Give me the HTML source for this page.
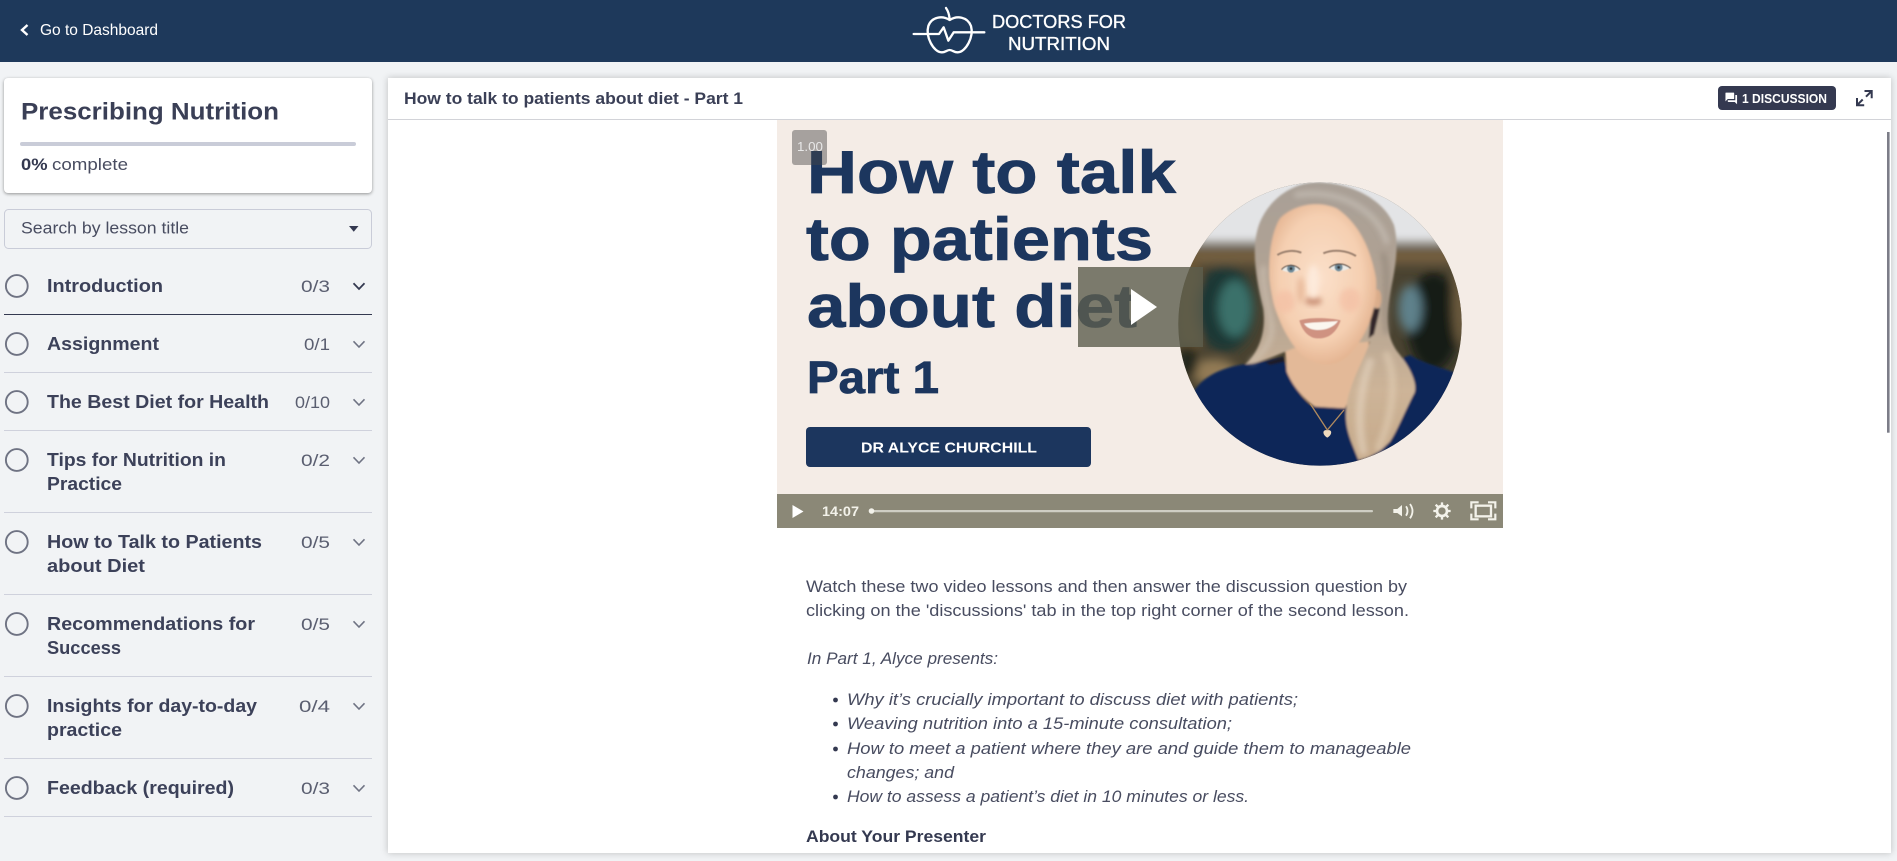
<!DOCTYPE html>
<html lang="en">
<head>
<meta charset="utf-8">
<title>How to talk to patients about diet - Part 1</title>
<style>
html,body{margin:0;padding:0;width:1897px;height:861px;overflow:hidden;background:#f1f3f5}
body{position:relative;font-family:"Liberation Sans",sans-serif}
.hd{position:absolute;left:0;top:0;width:1897px;height:62px;background:#1e395b}
.card{position:absolute;left:4px;top:78px;width:368px;height:115px;background:#fff;border-radius:4px;box-shadow:0 1px 3px rgba(0,0,0,.4)}
.panel{position:absolute;left:388px;top:78px;width:1503px;height:775px;background:#fff;box-shadow:0 0 7px rgba(0,0,0,.22)}
svg.main{position:absolute;left:0;top:0}
text{font-family:"Liberation Sans",sans-serif;white-space:pre}
.b{font-weight:700}
.it{font-size:18.1px;font-weight:700;fill:#3c4159}
.ct{font-size:17px;fill:#5a5e70}
.p{font-size:16.9px;fill:#484c60}
.i{font-size:16.9px;font-style:italic;fill:#484c60}
.nv{font-weight:700;fill:#1c365e;stroke:#1c365e;stroke-width:.8px}
</style>
</head>
<body>
<div class="hd"></div>
<div class="card"></div>
<div class="panel"></div>
<svg class="main" width="1897" height="861" viewBox="0 0 1897 861" xmlns="http://www.w3.org/2000/svg">
<defs>
<clipPath id="pc"><circle cx="450" cy="447" r="425"/></clipPath>
<clipPath id="panelclip"><rect x="388" y="78" width="1503" height="775"/></clipPath>
<filter id="b12" x="-30%" y="-30%" width="160%" height="160%"><feGaussianBlur stdDeviation="14"/></filter>
<filter id="b5" x="-50%" y="-50%" width="200%" height="200%"><feGaussianBlur stdDeviation="9"/></filter>
<filter id="b3" x="-20%" y="-20%" width="140%" height="140%"><feGaussianBlur stdDeviation="3"/></filter>
<filter id="b1" x="-20%" y="-20%" width="140%" height="140%"><feGaussianBlur stdDeviation="1.6"/></filter>
<radialGradient id="fg" cx="48%" cy="46%" r="60%"><stop offset="0" stop-color="#fbe0ca"/><stop offset=".65" stop-color="#f5cfb1"/><stop offset="1" stop-color="#dfac88"/></radialGradient>
<linearGradient id="hg" x1="0" y1="0" x2="0" y2="1"><stop offset="0" stop-color="#a9a097"/><stop offset=".45" stop-color="#b3a392"/><stop offset=".75" stop-color="#cdb498"/><stop offset="1" stop-color="#c6aa8b"/></linearGradient>
</defs>

<!-- header -->
<path d="M27.5 25 L22 30 L27.5 35" fill="none" stroke="#fff" stroke-width="2.4"/>
<text x="40" y="35" font-size="15.7" fill="#fff" textLength="118" lengthAdjust="spacingAndGlyphs">Go to Dashboard</text>
<g transform="translate(905,0) scale(.3333)" fill="none" stroke="#fff" stroke-width="7" stroke-linejoin="round" stroke-linecap="round">
<path d="M134 60 C112 46 80 50 70 78 C61 110 85 156 110 157 C120 158 125 150 134 150 C143 150 148 158 158 157 C183 156 207 110 198 78 C187 50 156 46 134 60 Z"/>
<path d="M123 24 C130 34 133 46 134 58"/>
<path d="M26 102 H102 L116 82 L130 122 L146 97 H238"/>
</g>
<g style="stroke:#fff;stroke-width:.35px">
<text x="992" y="28" font-size="18.8" fill="#fff" textLength="134" lengthAdjust="spacingAndGlyphs">DOCTORS FOR</text>
<text x="1008" y="50" font-size="18.8" fill="#fff" textLength="102" lengthAdjust="spacingAndGlyphs">NUTRITION</text>
</g>

<!-- left card -->
<text x="21" y="119.5" font-size="24.4" class="b" fill="#3a3f56" textLength="258" lengthAdjust="spacingAndGlyphs">Prescribing Nutrition</text>
<rect x="20" y="142" width="336" height="4" rx="2" fill="#c9ccd8"/>
<text x="21" y="170" font-size="17" class="b" fill="#343950" textLength="26.5" lengthAdjust="spacingAndGlyphs">0%</text>
<text x="52" y="170" font-size="17" fill="#484c60" textLength="76" lengthAdjust="spacingAndGlyphs">complete</text>

<!-- search -->
<rect x="4.5" y="209.5" width="367" height="39" rx="4" fill="#f1f3f5" stroke="#c9ccd8"/>
<text x="21" y="233.5" font-size="16.9" fill="#484c60" textLength="168" lengthAdjust="spacingAndGlyphs">Search by lesson title</text>
<path d="M349 226 H358.5 L353.75 231.7 Z" fill="#343950"/>

<!-- list -->
<g fill="none" stroke="#6f7383" stroke-width="1.9">
<circle cx="16.8" cy="286" r="10.9"/><circle cx="16.8" cy="344" r="10.9"/><circle cx="16.8" cy="402" r="10.9"/><circle cx="16.8" cy="460" r="10.9"/><circle cx="16.8" cy="542" r="10.9"/><circle cx="16.8" cy="624" r="10.9"/><circle cx="16.8" cy="706" r="10.9"/><circle cx="16.8" cy="788" r="10.9"/>
</g>
<g class="t">
<text class="it" x="47" y="292" textLength="116" lengthAdjust="spacingAndGlyphs">Introduction</text>
<text class="it" x="47" y="350" textLength="112" lengthAdjust="spacingAndGlyphs">Assignment</text>
<text class="it" x="47" y="408" textLength="222" lengthAdjust="spacingAndGlyphs">The Best Diet for Health</text>
<text class="it" x="47" y="466" textLength="179" lengthAdjust="spacingAndGlyphs">Tips for Nutrition in</text>
<text class="it" x="47" y="490" textLength="75" lengthAdjust="spacingAndGlyphs">Practice</text>
<text class="it" x="47" y="548" textLength="215" lengthAdjust="spacingAndGlyphs">How to Talk to Patients</text>
<text class="it" x="47" y="572" textLength="98" lengthAdjust="spacingAndGlyphs">about Diet</text>
<text class="it" x="47" y="630" textLength="208" lengthAdjust="spacingAndGlyphs">Recommendations for</text>
<text class="it" x="47" y="654" textLength="74" lengthAdjust="spacingAndGlyphs">Success</text>
<text class="it" x="47" y="712" textLength="210" lengthAdjust="spacingAndGlyphs">Insights for day-to-day</text>
<text class="it" x="47" y="736" textLength="75" lengthAdjust="spacingAndGlyphs">practice</text>
<text class="it" x="47" y="794" textLength="187" lengthAdjust="spacingAndGlyphs">Feedback (required)</text>
<text class="ct" x="301" y="292" textLength="29" lengthAdjust="spacingAndGlyphs">0/3</text>
<text class="ct" x="304" y="350" textLength="26" lengthAdjust="spacingAndGlyphs">0/1</text>
<text class="ct" x="295" y="408" textLength="35" lengthAdjust="spacingAndGlyphs">0/10</text>
<text class="ct" x="301" y="466" textLength="29" lengthAdjust="spacingAndGlyphs">0/2</text>
<text class="ct" x="301" y="548" textLength="29" lengthAdjust="spacingAndGlyphs">0/5</text>
<text class="ct" x="301" y="630" textLength="29" lengthAdjust="spacingAndGlyphs">0/5</text>
<text class="ct" x="299" y="712" textLength="31" lengthAdjust="spacingAndGlyphs">0/4</text>
<text class="ct" x="301" y="794" textLength="29" lengthAdjust="spacingAndGlyphs">0/3</text>
</g>
<path d="M353.5 283.3 L359 289 L364.5 283.3" fill="none" stroke="#343950" stroke-width="1.8"/>
<g fill="none" stroke="#6f7383" stroke-width="1.6">
<path d="M353.5 341.3 L359 347 L364.5 341.3"/><path d="M353.5 399.3 L359 405 L364.5 399.3"/><path d="M353.5 457.3 L359 463 L364.5 457.3"/><path d="M353.5 539.3 L359 545 L364.5 539.3"/><path d="M353.5 621.3 L359 627 L364.5 621.3"/><path d="M353.5 703.3 L359 709 L364.5 703.3"/><path d="M353.5 785.3 L359 791 L364.5 785.3"/>
</g>
<rect x="4" y="314" width="368" height="1" fill="#343950"/>
<g fill="#cfd1dc">
<rect x="4" y="372" width="368" height="1"/><rect x="4" y="430" width="368" height="1"/><rect x="4" y="512" width="368" height="1"/><rect x="4" y="594" width="368" height="1"/><rect x="4" y="676" width="368" height="1"/><rect x="4" y="758" width="368" height="1"/><rect x="4" y="816" width="368" height="1"/>
</g>

<!-- panel header -->
<text x="404" y="104" font-size="16.9" class="b" fill="#3a3f56" textLength="339" lengthAdjust="spacingAndGlyphs">How to talk to patients about diet - Part 1</text>
<rect x="388" y="119" width="1503" height="1" fill="#d2d3d8"/>
<rect x="1718" y="86" width="118" height="24" rx="4" fill="#343950"/>
<path transform="translate(1724.3,91.5) scale(.58)" fill="#fff" d="M21 6h-2v9H6v2c0 .55.45 1 1 1h11l4 4V7c0-.55-.45-1-1-1zm-4 6V3c0-.55-.45-1-1-1H3c-.55 0-1 .45-1 1v14l4-4h10c.55 0 1-.45 1-1z"/>
<text x="1742" y="103" font-size="13.2" class="b" fill="#fff" textLength="85" lengthAdjust="spacingAndGlyphs">1 DISCUSSION</text>
<g fill="none" stroke="#343950" stroke-width="2">
<path d="M1864.5 91 H1871.7 V98.2 M1871.7 91 L1866 96.7"/>
<path d="M1857 98 V105.2 H1864.2 M1857 105.2 L1862.7 99.5"/>
</g>
<rect x="1887" y="132" width="2.6" height="300.7" fill="#7c7d88"/>

<!-- video -->
<rect x="777" y="120" width="726" height="374" fill="#f4ece6"/>
<text class="nv" x="807" y="193" font-size="60" textLength="369" lengthAdjust="spacingAndGlyphs">How to talk</text>
<text class="nv" x="806" y="260" font-size="60" textLength="347" lengthAdjust="spacingAndGlyphs">to patients</text>
<text class="nv" x="807" y="327" font-size="60" textLength="330" lengthAdjust="spacingAndGlyphs">about diet</text>
<text class="nv" x="807" y="393" font-size="45" textLength="132" lengthAdjust="spacingAndGlyphs">Part 1</text>
<rect x="806" y="427" width="285" height="40" rx="4" fill="#1c365e"/>
<text x="861" y="452.5" font-size="15" class="b" fill="#fff" textLength="176" lengthAdjust="spacingAndGlyphs">DR ALYCE CHURCHILL</text>

<!-- portrait -->
<g transform="translate(1170,175) scale(.33333)">
<g clip-path="url(#pc)">
<rect x="0" y="0" width="900" height="900" fill="#4a4331"/>
<g filter="url(#b12)">
<rect x="-50" y="-50" width="1000" height="255" fill="#e3e4e6"/>
<rect x="-50" y="218" width="1000" height="50" fill="#735f3f"/>
<ellipse cx="60" cy="400" rx="40" ry="160" fill="#6a5636"/>
<ellipse cx="165" cy="400" rx="90" ry="130" fill="#1f3735"/>
<ellipse cx="195" cy="400" rx="50" ry="85" fill="#3a716a"/>
<ellipse cx="130" cy="590" rx="70" ry="38" fill="#927a55"/>
<ellipse cx="55" cy="560" rx="30" ry="50" fill="#22261c"/>
<ellipse cx="790" cy="440" rx="80" ry="150" fill="#191d16"/>
<ellipse cx="720" cy="400" rx="35" ry="70" fill="#5f818b"/>
<ellipse cx="870" cy="380" rx="24" ry="130" fill="#6a5a3e"/>
</g>
<g filter="url(#b3)">
<path d="M60 670 C90 600 170 570 250 565 L340 545 C360 620 400 680 430 695 L525 700 C560 660 640 570 720 540 C770 570 830 580 870 600 L900 900 L0 900 Z" fill="#0f2558"/>
<path d="M345 520 L350 590 C370 640 410 680 435 695 L525 700 L590 560 L600 480 Z" fill="#e3b998"/>
<path d="M225 568 C260 540 290 480 280 400 C255 300 240 200 275 130 C310 60 380 20 450 22 C540 25 640 70 672 150 C685 200 680 260 665 330 C650 410 640 480 690 540 C730 590 745 640 730 660 C700 720 680 770 660 800 C620 840 590 850 565 855 C545 800 520 760 530 690 C540 620 580 560 600 500 L370 520 C320 540 270 565 225 568 Z" fill="url(#hg)"/>
<path d="M605 400 L630 400 L612 478 L596 490 Z" fill="#33272a"/>
<path d="M285 562 L340 545 L345 560 L300 570 Z" fill="#1a1c28"/>
<ellipse cx="622" cy="372" rx="13" ry="28" fill="#dcae8c"/>
<path d="M330 130 C370 90 440 75 500 100 C560 140 600 210 618 310 C625 400 590 490 530 545 C490 580 430 575 385 530 C335 470 305 390 298 310 C295 240 305 170 330 130 Z" fill="url(#fg)"/>
</g>
<g fill="none" filter="url(#b5)" stroke-linecap="round" opacity=".6">
<path d="M380 60 C500 40 620 100 650 200" stroke="#cfc8c0" stroke-width="16"/>
<path d="M640 240 C660 300 640 400 650 470" stroke="#8c8175" stroke-width="16"/>
<path d="M600 560 C570 640 560 740 580 830" stroke="#e6d6c2" stroke-width="24"/>
<path d="M650 540 C680 610 670 720 625 820" stroke="#e2cfb6" stroke-width="22"/>
<path d="M280 280 C275 340 300 400 305 460 C305 500 275 540 245 560" stroke="#d4c7b8" stroke-width="16"/>
</g>
<ellipse cx="430" cy="378" rx="26" ry="12" fill="#c98f74" filter="url(#b5)"/>
<ellipse cx="430" cy="320" rx="18" ry="50" fill="#fdeadb" filter="url(#b5)"/>
<ellipse cx="392" cy="345" rx="10" ry="40" fill="#e8b99a" filter="url(#b5)"/>
<ellipse cx="345" cy="380" rx="30" ry="34" fill="#f4bfa4" filter="url(#b5)" opacity=".7"/>
<ellipse cx="540" cy="375" rx="32" ry="36" fill="#f4bfa4" filter="url(#b5)" opacity=".7"/>
<g filter="url(#b1)">
<path d="M322 240 C342 227 370 224 394 233" fill="none" stroke="#9d8270" stroke-width="6"/>
<path d="M460 235 C490 222 530 226 558 243" fill="none" stroke="#9d8270" stroke-width="6"/>
<path d="M335 284 C347 270 375 268 390 284 C375 294 347 294 335 284 Z" fill="#ecece8"/>
<path d="M478 279 C495 266 520 266 540 279 C520 290 495 291 478 279 Z" fill="#ecece8"/>
<circle cx="363" cy="281" r="12" fill="#6f8c9b"/><circle cx="363" cy="281" r="4.5" fill="#2d3136"/>
<circle cx="506" cy="277" r="12" fill="#6f8c9b"/><circle cx="506" cy="277" r="4.5" fill="#2d3136"/>
<path d="M335 284 C347 268 375 266 390 284" fill="none" stroke="#54443a" stroke-width="3.5"/>
<path d="M478 279 C495 263 522 263 542 280" fill="none" stroke="#54443a" stroke-width="3.5"/>
<path d="M388 436 C420 426 480 428 512 436 C498 478 470 492 440 490 C415 488 396 466 388 436 Z" fill="#cf9281"/>
<path d="M402 446 C430 441 478 441 504 438 C490 458 465 466 440 465 C422 464 410 458 402 446 Z" fill="#fbf6ef"/>
</g>
<path d="M420 685 L472 765 L522 705" fill="none" stroke="#b08a5e" stroke-width="4"/>
<path d="M472 788 C455 778 458 762 472 766 C486 762 489 778 472 788 Z" fill="#eedabd"/>
</g>
</g>

<!-- play overlay, speed badge -->
<rect x="1078" y="267" width="125" height="80" fill="rgba(92,94,78,.8)"/>
<path d="M1131 289 L1157 307 L1131 325 Z" fill="#fff"/>
<rect x="792" y="130" width="35" height="35" rx="3" fill="rgba(70,70,70,.45)"/>
<text x="797" y="151" font-size="12.5" fill="#e8e8e8" textLength="26" lengthAdjust="spacingAndGlyphs">1.00</text>

<!-- control bar -->
<rect x="777" y="494" width="726" height="34" fill="#8b8877"/>
<path d="M792.5 505 L803.5 511.5 L792.5 518 Z" fill="#fff"/>
<text x="822" y="516" font-size="13.5" class="b" fill="#f3f2ea" textLength="37" lengthAdjust="spacingAndGlyphs">14:07</text>
<rect x="870" y="510" width="503" height="2.2" rx="1" fill="#cfcec4"/>
<circle cx="871.5" cy="511" r="2.8" fill="#f3f2ea"/>
<g transform="translate(1380,495) scale(.3333)">
<path d="M40 42 H52 L66 30 V64 L52 54 H40 Z" fill="#f3f2ea"/>
<path d="M78 34 C84 42 84 54 78 62 M90 27 C100 40 100 56 90 70" fill="none" stroke="#f3f2ea" stroke-width="5.5"/>
<circle cx="186" cy="48" r="15" fill="none" stroke="#f3f2ea" stroke-width="8"/>
<path d="M186 22 V33 M186 63 V74 M160 48 H171 M201 48 H212 M167 29 L175 37 M197 59 L205 67 M205 29 L197 37 M175 59 L167 67" stroke="#f3f2ea" stroke-width="7" fill="none"/>
<rect x="287" y="32" width="46" height="32" fill="none" stroke="#f3f2ea" stroke-width="7"/>
<path d="M274 40 V22 H296 M324 22 H346 V40 M274 56 V73 H296 M324 73 H346 V56" fill="none" stroke="#f3f2ea" stroke-width="6.5"/>
</g>

<!-- body copy -->
<g clip-path="url(#panelclip)">
<text class="p" x="806" y="592" textLength="601" lengthAdjust="spacingAndGlyphs">Watch these two video lessons and then answer the discussion question by</text>
<text class="p" x="806" y="616" textLength="603" lengthAdjust="spacingAndGlyphs">clicking on the 'discussions' tab in the top right corner of the second lesson.</text>
<text class="i" x="807" y="664" textLength="191" lengthAdjust="spacingAndGlyphs">In Part 1, Alyce presents:</text>
<g fill="#343950"><circle cx="835.5" cy="700" r="2.4"/><circle cx="835.5" cy="724" r="2.4"/><circle cx="835.5" cy="749" r="2.4"/><circle cx="835.5" cy="797" r="2.4"/></g>
<text class="i" x="847" y="705" textLength="451" lengthAdjust="spacingAndGlyphs">Why it’s crucially important to discuss diet with patients;</text>
<text class="i" x="847" y="729" textLength="385" lengthAdjust="spacingAndGlyphs">Weaving nutrition into a 15-minute consultation;</text>
<text class="i" x="847" y="754" textLength="564" lengthAdjust="spacingAndGlyphs">How to meet a patient where they are and guide them to manageable</text>
<text class="i" x="847" y="778" textLength="107" lengthAdjust="spacingAndGlyphs">changes; and</text>
<text class="i" x="847" y="802" textLength="402" lengthAdjust="spacingAndGlyphs">How to assess a patient’s diet in 10 minutes or less.</text>
<text class="p b" x="806" y="842" style="font-weight:700;fill:#343950" textLength="180" lengthAdjust="spacingAndGlyphs">About Your Presenter</text>
</g>
</svg>
</body>
</html>
